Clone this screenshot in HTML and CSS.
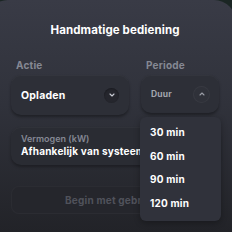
FILE: index.html
```html
<!DOCTYPE html>
<html lang="nl">
<head>
    <meta charset="UTF-8">
    <meta name="viewport" content="width=device-width, initial-scale=1.0">
    <title>Handmatige bediening</title>
    <link rel="stylesheet" href="styles.css">
</head>
<body>
    <div class="panel">
        <h1 class="title">Handmatige bediening</h1>
        <div class="row">
            <div class="field field-action">
                <div class="label">Actie</div>
                <div class="select">
                    <span class="value">Opladen</span>
                    <span class="chev">
                        <svg width="8" height="8" viewBox="0 0 8 8"><path d="M2 3l2 2 2-2" fill="none" stroke="#c9ccd4" stroke-width="1.1" stroke-linecap="round" stroke-linejoin="round"/></svg>
                    </span>
                </div>
            </div>
            <div class="field field-period">
                <div class="label">Periode</div>
                <div class="select select-open">
                    <span class="value value-muted">Duur</span>
                    <span class="chev chev-open">
                        <svg width="8" height="8" viewBox="0 0 8 8"><path d="M2 5l2-2 2 2" fill="none" stroke="#9a9da6" stroke-width="1.1" stroke-linecap="round" stroke-linejoin="round"/></svg>
                    </span>
                </div>
                <ul class="menu">
                    <li>30 min</li>
                    <li>60 min</li>
                    <li>90 min</li>
                    <li>120 min</li>
                </ul>
            </div>
        </div>
        <div class="power">
            <div class="power-label">Vermogen (kW)</div>
            <div class="power-value">Afhankelijk van systeem</div>
        </div>
        <button class="start" disabled><span class="start-text">Begin met gebr</span></button>
    </div>
</body>
</html>
```

FILE: styles.css
```css
* {
    margin: 0;
    padding: 0;
    box-sizing: border-box;
}
body {
    background: #1b2624;
    font-family: 'Inter', 'Open Sans', sans-serif;
    color: #ffffff;
    overflow: hidden;
    width: 232px;
    height: 232px;
}
.panel { margin-left: -14px; width: 250px; height: 232px; padding: 23px 16px 0 25px; border-radius: 22px 22px 0 0; background: linear-gradient(180deg, #393b46 0%, #30323b 45%, #222328 100%); }
.title { font-size: 11.5px; font-weight: 700; text-align: center; letter-spacing: 0.1px; margin-left: -1px; }
.row { display: flex; gap: 12px; margin-top: 22px; }
.label { font-size: 10px; font-weight: 700; color: #858893; padding-left: 5px; margin-bottom: 4px; letter-spacing: 0.2px; }
.field-action { width: 118px; }
.field-period { width: 78px; position: relative; }
.select { height: 40px; border-radius: 10px; background: #2d2f37; display: flex; align-items: center; justify-content: space-between; padding: 0 10px 0 10px; box-shadow: 0 2px 3px rgba(0, 0, 0, 0.35), inset 0 1px 0 rgba(255, 255, 255, 0.03); }
.select-open { height: 38px; }
.value { font-size: 10.5px; font-weight: 700; letter-spacing: 0.2px; }
.value-muted { font-size: 8.5px; color: #a3a6ae; }
.chev { width: 15px; height: 15px; border-radius: 50%; background: #25262d; display: flex; align-items: center; justify-content: center; box-shadow: inset 0 1px 2px rgba(0, 0, 0, 0.3); }
.chev-open { background: #2f3139; box-shadow: 0 0 0 1px rgba(255, 255, 255, 0.05); }
.menu { position: absolute; left: -1px; top: 58px; width: 81px; height: 104px; list-style: none; background: #30323b; border-radius: 6px; padding: 8px 0 0 10px; z-index: 5; box-shadow: 0 2px 6px rgba(0, 0, 0, 0.3); }
.menu li { font-size: 10px; font-weight: 700; height: 23.5px; line-height: 14px; letter-spacing: 0.2px; }
.power { margin-top: 12px; height: 38px; border-radius: 10px; background: #2a2c33; padding: 6px 10px; box-shadow: 0 2px 3px rgba(0, 0, 0, 0.3), inset 0 1px 0 rgba(255, 255, 255, 0.03); }
.power-label { font-size: 9px; font-weight: 600; color: #858893; line-height: 11px; }
.power-value { font-size: 10px; font-weight: 700; line-height: 15px; white-space: nowrap; letter-spacing: 0.2px; }
.start { display: flex; width: 210px; height: 28px; margin-top: 21px; padding-left: 53px; align-items: center; border-radius: 8px; border: 1px solid rgba(255, 255, 255, 0.03); background: #25262c; color: #50525b; font-family: inherit; font-size: 10px; font-weight: 700; letter-spacing: 0.2px; }
```
